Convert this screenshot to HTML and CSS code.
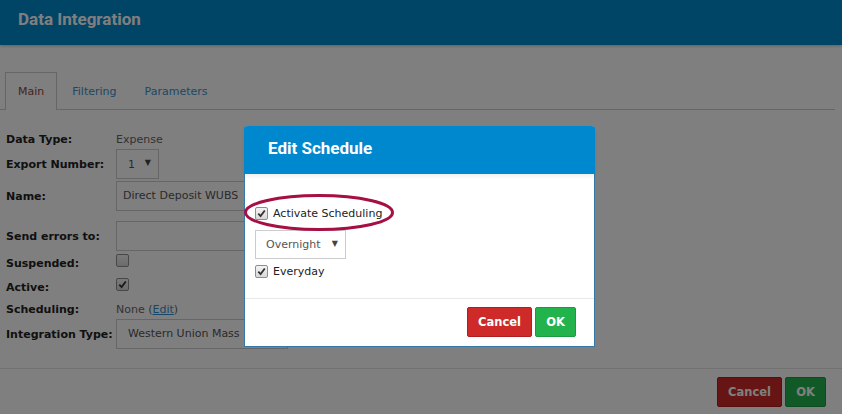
FILE: index.html
```html
<!DOCTYPE html>
<html lang="en">
<head>
    <meta charset="UTF-8">
    <meta name="viewport" content="width=device-width, initial-scale=1.0">
    <title>Data Integration</title>
    <link rel="stylesheet" href="styles.css">
</head>
<body>

    <header class="page-header">
        <h1>Data Integration</h1>
    </header>

    <ul class="tabs">
        <li class="tab active">Main</li>
        <li class="tab">Filtering</li>
        <li class="tab">Parameters</li>
    </ul>

    <div class="form">
        <div class="row row-text">
            <label>Data Type:</label>
            <span class="value">Expense</span>
        </div>
        <div class="row row-field">
            <label>Export Number:</label>
            <div class="select select-small"><span>1</span><span class="arrow">&#9660;</span></div>
        </div>
        <div class="row row-field row-name">
            <label>Name:</label>
            <div class="input input-wide">Direct Deposit WUBS</div>
        </div>
        <div class="row row-field row-errors">
            <label>Send errors to:</label>
            <div class="input input-wide"></div>
        </div>
        <div class="row row-check">
            <label>Suspended:</label>
            <span class="check"></span>
        </div>
        <div class="row row-check">
            <label>Active:</label>
            <span class="check checked"><svg viewBox="0 0 12 12"><path d="M2.5 6.2 L5 8.8 L9.6 2.8" /></svg></span>
        </div>
        <div class="row row-text">
            <label>Scheduling:</label>
            <span class="value">None (<a href="#">Edit</a>)</span>
        </div>
        <div class="row row-field">
            <label>Integration Type:</label>
            <div class="input input-type">Western Union Mass</div>
        </div>
    </div>

    <div class="page-footer">
        <button class="btn btn-cancel">Cancel</button>
        <button class="btn btn-ok">OK</button>
    </div>

    <!-- modal backdrop + dialog -->
    <div class="backdrop">
        <div class="modal">
            <div class="modal-header">
                <h2>Edit Schedule</h2>
            </div>
            <div class="modal-body">
                <div class="modal-row activate">
                    <span class="check checked"><svg viewBox="0 0 12 12"><path d="M2.5 6.2 L5 8.8 L9.6 2.8" /></svg></span>
                    <span>Activate Scheduling</span>
                    <svg class="circle-mark" width="152" height="40" viewBox="0 0 152 40">
                        <ellipse cx="76" cy="19.5" rx="73.5" ry="17" />
                    </svg>
                </div>
                <div class="select select-time"><span>Overnight</span><span class="arrow">&#9660;</span></div>
                <div class="modal-row everyday">
                    <span class="check checked"><svg viewBox="0 0 12 12"><path d="M2.5 6.2 L5 8.8 L9.6 2.8" /></svg></span>
                    <span>Everyday</span>
                </div>
            </div>
            <div class="modal-footer">
                <button class="btn btn-cancel">Cancel</button>
                <button class="btn btn-ok">OK</button>
            </div>
        </div>
    </div>

</body>
</html>
```

FILE: styles.css
```css
body {
    font-family: 'DejaVu Sans', Verdana, sans-serif;
    font-size: 11px;
    margin: 0;
    padding: 0;
    background-color: #fff;
    color: #222;
}
.page-header {
    background-color: #0088cc;
    height: 45px;
    box-shadow: 0 1px 3px rgba(0,0,0,0.25);
}
.page-header h1 {
    margin: 0;
    padding: 8px 0 0 18px;
    font-family: 'Roboto', sans-serif;
    font-size: 17px;
    font-weight: bold;
    line-height: 22px;
    color: #fff;
}
.tabs {
    list-style-type: none;
    margin: 27px 7px 0 0;
    padding: 0 0 0 5px;
    display: flex;
    border-bottom: 1px solid #ccc;
    height: 37px;
}
.tab {
    padding: 0 12px;
    margin-right: 2px;
    border: 1px solid transparent;
    border-bottom: none;
    line-height: 37px;
    color: #3d8fc8;
}
.tab.active {
    border-color: #ccc;
    background-color: #fff;
    height: 37px;
    color: #8a4444;
}
.form {
    padding: 19px 0 0 6px;
}
.row {
    display: flex;
    align-items: center;
}
.row label {
    width: 110px;
    font-weight: bold;
    color: #222;
}
.row-text {
    height: 20px;
}
.row-field {
    height: 30px;
}
.row-name {
    margin-top: 2px;
}
.row-errors {
    margin-top: 10px;
}
.row-check {
    height: 24px;
    align-items: flex-start;
}
.row-check label {
    line-height: 24px;
    padding-top: 1px;
}
.row-check .check {
    margin-top: 3px;
}
.value {
    color: #666;
}
.value a {
    color: #2f8fd0;
}
.input {
    box-sizing: border-box;
    height: 30px;
    border: 1px solid #ccc;
    line-height: 28px;
    padding: 0 6px;
    color: #555;
}
.input-wide {
    width: 300px;
}
.input-type {
    width: 172px;
    padding-left: 11px;
}
.select {
    box-sizing: border-box;
    display: flex;
    justify-content: space-between;
    align-items: center;
    border: 1px solid #ccc;
    background-color: #fff;
    color: #555;
}
.select .arrow {
    font-size: 8px;
    color: #444;
    margin-top: -3px;
}
.select-small {
    width: 43px;
    height: 30px;
    padding: 0 7px 0 11px;
}
.check {
    box-sizing: border-box;
    display: inline-block;
    width: 13px;
    height: 13px;
    border: 1px solid #8e8e8e;
    border-radius: 2px;
    background: linear-gradient(#f4f4f4, #d8d8d8);
}
.check svg {
    display: block;
    width: 11px;
    height: 11px;
}
.check path {
    fill: none;
    stroke: #333;
    stroke-width: 2;
}
.page-footer {
    margin-top: 19px;
    border-top: 1px solid #e5e5e5;
    padding: 8px 16px 0 0;
    display: flex;
    justify-content: flex-end;
    gap: 3px;
}
.btn {
    height: 30px;
    border-radius: 2px;
    font-family: 'DejaVu Sans', Verdana, sans-serif;
    font-size: 11.5px;
    font-weight: bold;
    color: #fff;
    padding: 0;
    cursor: pointer;
}
.btn-cancel {
    width: 65px;
    background-color: #cd2a29;
    border: 1px solid #b01f1f;
}
.btn-ok {
    width: 41px;
    background-color: #22b34c;
    border: 1px solid #1b9a40;
}
.backdrop {
    position: fixed;
    top: 0;
    left: 0;
    right: 0;
    bottom: 0;
    background-color: rgba(0,0,0,0.5);
}
.modal {
    box-sizing: border-box;
    width: 351px;
    height: 221px;
    margin: 126px 0 0 244px;
    background-color: #fff;
    border: 1px solid #3579a8;
    border-top: none;
    border-radius: 4px 4px 0 0;
}
.modal-header {
    background-color: #0088cf;
    height: 48px;
    margin: 0 -1px;
    border-radius: 4px 4px 0 0;
    box-shadow: 0 2px 4px rgba(0,0,0,0.08);
}
.modal-header h2 {
    margin: 0;
    padding: 11px 0 0 24px;
    font-family: 'Roboto', sans-serif;
    font-size: 17px;
    font-weight: bold;
    line-height: 22px;
    color: #fff;
}
.modal-body {
    padding: 30px 10px 0 10px;
    height: 125px;
    box-sizing: border-box;
    border-bottom: 1px solid #e8e8e8;
}
.modal-row {
    display: flex;
    align-items: center;
    gap: 5px;
    color: #222;
}
.activate {
    position: relative;
    height: 18px;
}
.circle-mark {
    position: absolute;
    left: -12px;
    top: -11px;
}
.circle-mark ellipse {
    fill: none;
    stroke: #a50f43;
    stroke-width: 3;
}
.select-time {
    width: 91px;
    height: 29px;
    margin-top: 8px;
    padding: 0 7px 0 10px;
}
.everyday {
    margin-top: 5px;
    height: 14px;
}
.modal-footer {
    display: flex;
    justify-content: flex-end;
    gap: 3px;
    padding: 8px 18px 0 0;
}
```
